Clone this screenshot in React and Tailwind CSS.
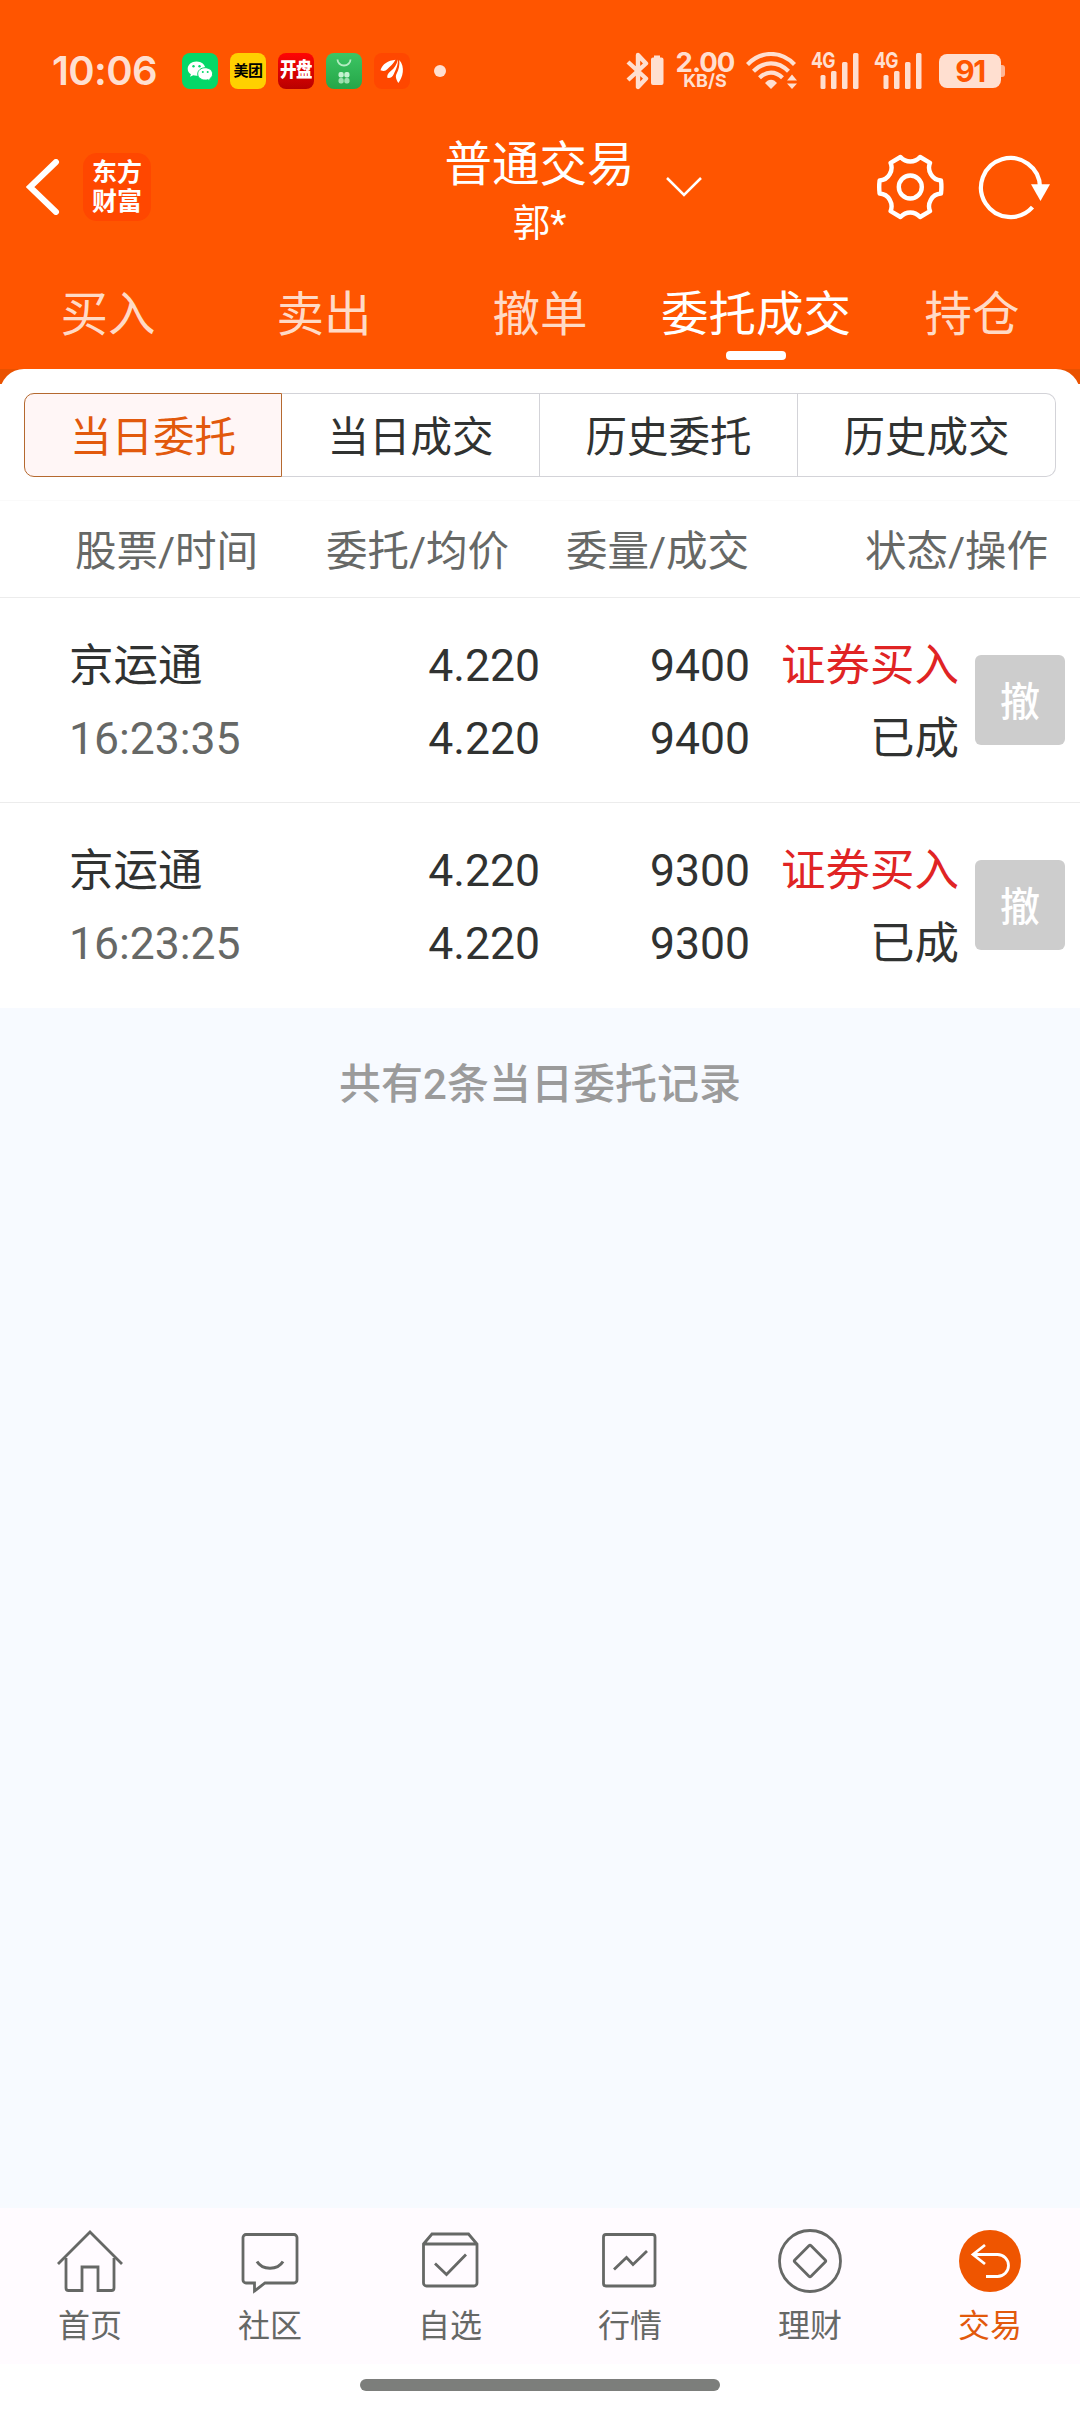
import React, { useState } from 'react';
import clsx from 'clsx';

const tabs = ['买入', '卖出', '撤单', '委托成交', '持仓'];

const segments = ['当日委托', '当日成交', '历史委托', '历史成交'];

const orders = [
  { name: '京运通', time: '16:23:35', price: '4.220', avg: '4.220', amount: '9400', filled: '9400', side: '证券买入', status: '已成' },
  { name: '京运通', time: '16:23:25', price: '4.220', avg: '4.220', amount: '9300', filled: '9300', side: '证券买入', status: '已成' },
];

const WechatIcon = () => (
  <svg viewBox="0 0 36 36" className="size-9">
    <rect width="36" height="36" rx="8" fill="#04d868" />
    <path d="M14.5 8.5c-5 0-8.8 3.2-8.8 7.2 0 2.300 1.200 4.200 3.200 5.500l-.8 2.600 3.100-1.600c1 .3 2.200.5 3.300.5 5 0 8.900-3.200 8.900-7 0-4-3.900-7.200-8.900-7.200z" fill="#fff" />
    <path d="M23.200 14.700c-4.200 0-7.500 2.800-7.500 6.200s3.300 6.200 7.500 6.200c.9 0 1.800-.1 2.600-.4l2.500 1.400-.6-2.200c1.700-1.200 2.900-2.900 2.900-5 0-3.400-3.300-6.200-7.400-6.200z" fill="#fff" stroke="#04d868" strokeWidth="1" />
    <g fill="#04d868">
      <circle cx="11.500" cy="13.300" r="1.200" />
      <circle cx="17.500" cy="13.300" r="1.200" />
      <circle cx="20.800" cy="19" r="1" />
      <circle cx="25.700" cy="19" r="1" />
    </g>
  </svg>
);

const CloverIcon = () => (
  <svg viewBox="0 0 36 36" className="size-9">
    <defs>
      <linearGradient id="clover" x1="0" y1="0" x2="0" y2="1">
        <stop offset="0" stopColor="#3cc564" />
        <stop offset="1" stopColor="#25a648" />
      </linearGradient>
    </defs>
    <rect width="36" height="36" rx="8" fill="url(#clover)" />
    <path d="M11.500 6.500a6.500 6 0 0 0 13 0" fill="none" stroke="#b5edc3" strokeWidth="1.800" />
    <g fill="#c5f2d0">
      <rect x="12.500" y="19" width="5.200" height="5.500" rx="2" />
      <rect x="18.300" y="19" width="5.200" height="5.500" rx="2" />
      <rect x="12.500" y="25" width="5.200" height="5.500" rx="2" opacity=".75" />
      <rect x="18.300" y="25" width="5.200" height="5.500" rx="2" opacity=".75" />
    </g>
  </svg>
);

const WingIcon = () => (
  <svg viewBox="0 0 36 36" className="size-9">
    <rect width="36" height="36" rx="8" fill="#ff4700" />
    <g fill="#fff">
      <path d="M21.500 6.800C14 7.500 8.500 11 6.500 17.200c3.500 1.300 5 .8 7-1.200 2.500-2.500 6-5 8-9.200z" />
      <path d="M23.800 6.500c-1 5-3.300 8.500-7 11.500-2.500 2-3.800 4-3.600 6.800 3.300.5 5.300-.8 6.600-3.800 2.200-5 4.500-9 4-14.500z" />
      <path d="M25.300 7c.5 5.500-.5 9.500-2.600 13.500-1.500 2.500-1 5 1.600 9.500C28.800 24.500 31.500 14 25.300 7z" />
    </g>
  </svg>
);

const BluetoothIcon = () => (
  <svg viewBox="0 0 38 38" className="h-[38px] w-[38px]" fill="none">
    <path d="M2 10l18 16.500-8 8.500V3l8 8.500L2 28" stroke="#ffdfd0" strokeWidth="4.400" strokeLinejoin="round" />
    <path d="M28 3.500h6v2h1.500a2 2 0 0 1 2 2v23.500a2 2 0 0 1-2 2h-8.500a2 2 0 0 1-2-2V7.500a2 2 0 0 1 2-2h1z" fill="#ffdfd0" />
  </svg>
);

const WifiIcon = () => (
  <svg viewBox="0 0 52 38" className="h-[38px] w-[52px]" fill="none">
    <g stroke="#ffdfd0" strokeWidth="4.200">
      <path d="M1.500 12.500C15-1.500 35-1.500 48.500 12.500" />
      <path d="M7.500 19.300c10.500-10.500 24.500-10.500 35 0" />
      <path d="M13.500 25.800c7-6.800 16-6.800 23 0" />
    </g>
    <path d="M19 31c3.500-4.500 8.500-4.500 12 0l-6 6z" fill="#ffdfd0" />
    <path d="M46 22.500l5 6H41zM46 37l5-5.500H41z" fill="#ffdfd0" />
  </svg>
);

const SignalIcon = () => (
  <div className="relative h-[38px] w-12">
    <svg viewBox="0 0 48 38" className="h-[38px] w-12" fill="#ffdfd0">
      <rect x="9.500" y="23" width="5" height="14" rx="1.500" />
      <rect x="20" y="19" width="5.500" height="18" rx="1.500" />
      <rect x="31" y="10" width="5.500" height="27" rx="1.500" />
      <rect x="42" y="1" width="5.500" height="36" rx="1.500" />
    </svg>
    <span className="absolute top-0 left-0 origin-left scale-x-80 text-[22px] leading-[17px] font-bold tracking-[-0.8px]">4G</span>
  </div>
);

const StatusBar = () => (
  <div className="flex h-[104px] items-center pt-[38px] pl-[52px] text-[#ffdfd0]">
    <span className="w-[130px] font-['Inter',sans-serif] text-[40px] leading-none font-semibold tracking-[-0.6px]">10:06</span>
    <div className="flex items-center gap-3">
      <WechatIcon />
      <span className="flex size-9 items-center justify-center rounded-lg bg-[#ffd000] text-[15px] font-bold tracking-[-0.5px] text-black">美团</span>
      <span className="flex size-9 items-center justify-center rounded-lg bg-linear-to-b from-[#ff0505] to-[#b80000] text-[16.5px] font-black tracking-[-0.5px] text-white">
        <span className="scale-y-125">开盘</span>
      </span>
      <CloverIcon />
      <WingIcon />
    </div>
    <span className="ml-6 size-3 rounded-full bg-[#ffdfd0]" />
    <div className="ml-[180px] flex items-center font-['Inter',sans-serif]">
      <BluetoothIcon />
      <div className="ml-3 flex w-[58px] flex-col items-center pb-[3px]">
        <span className="text-[27.5px] leading-[22px] font-bold tracking-[-1px]">2.00</span>
        <span className="text-[18px] leading-4 font-bold">KB/S</span>
      </div>
      <div className="ml-3"><WifiIcon /></div>
      <div className="ml-[13px]"><SignalIcon /></div>
      <div className="ml-[15px]"><SignalIcon /></div>
      <span className="ml-[17px] flex h-[34px] w-[62px] items-center justify-center rounded-[8px] bg-[#ffdfd0] text-[30px] leading-none font-bold tracking-[-1.5px] text-[#ff5500]">91</span>
      <span className="h-3 w-1 rounded-r-[3px] bg-[#ffb594]" />
    </div>
  </div>
);

const Header = () => (
  <div className="flex h-[166px] items-center text-white">
    <div className="flex w-[444px] items-center">
      <svg viewBox="0 0 34 56" className="ml-[26px] h-14 w-[34px]" fill="none" stroke="#fff" strokeWidth="6" strokeLinecap="round">
        <path d="M30 3L4 28l26 25" />
      </svg>
      <div className="ml-[23px] flex size-[68px] flex-col items-center justify-center rounded-[14px] bg-[#ff4700] text-[25px] leading-[29px] font-bold">
        <span>东方</span>
        <span>财富</span>
      </div>
    </div>
    <div className="mt-3 flex w-[191px] flex-col items-center leading-[60px]">
      <h1 className="text-[47.5px]">普通交易</h1>
      <span className="text-[37.5px] leading-[57px]">郭*</span>
    </div>
    <svg viewBox="0 0 38 22" className="ml-[30px] h-[22px] w-[38px]" fill="none" stroke="#fff" strokeWidth="2.500">
      <path d="M2 2l17 17L36 2" />
    </svg>
    <svg viewBox="0 0 68 68" className="ml-[173px] size-[68px]" fill="none" stroke="#fff" strokeWidth="4.400">
      <circle cx="34.300" cy="34" r="11.500" />
      <path
        d="M24.500 4C30 10 38.600 10 44.100 4L54 9.800C51 17 55.500 27 65 27.500Q65.800 34 65 40.500C55.500 41 51 51 54 58.200L44.100 64C38.600 58 30 58 24.500 64L14.600 58.200C17.600 51 13.100 41 3.600 40.500Q2.800 34 3.600 27.500C13.100 27 17.600 17 14.600 9.800Z"
        strokeLinejoin="round"
      />
    </svg>
    <svg viewBox="0 0 74 68" className="ml-[34px] h-[68px] w-[74px]" fill="none">
      <path d="M54.500 54.200A29.500 29.500 0 1 1 62 34" stroke="#fff" strokeWidth="4.200" />
      <path d="M53 31.200h19L62.500 48z" fill="#fff" />
    </svg>
  </div>
);

const HomeIcon = () => (
  <>
    <path d="M4 37L36 5l32 32" />
    <path d="M12 31v30a2.500 2.500 0 0 0 2.500 2.500H28V40h16v23.500h13.500A2.500 2.500 0 0 0 60 61V31" />
  </>
);

const ChatIcon = () => (
  <>
    <path d="M12 7.500h48a3 3 0 0 1 3 3v42.500a3 3 0 0 1-3 3H31L20.500 64V56H12a3 3 0 0 1-3-3V10.500a3 3 0 0 1 3-3z" />
    <path d="M23 34.500a14.500 12 0 0 0 26 0" strokeWidth="3" />
  </>
);

const BoxIcon = () => (
  <>
    <path d="M9.500 17l8.500-10h36.500l8.500 10v39a3 3 0 0 1-3 3H12.500a3 3 0 0 1-3-3zM9.500 17H63" />
    <path d="M21 36.500L32.500 47.500 52 27.500" />
  </>
);

const ChartIcon = () => (
  <>
    <rect x="9.500" y="7.500" width="51.500" height="51.500" rx="2.500" />
    <path d="M20 42.500l12.500-12L39 37.500 53 24" />
  </>
);

const DiamondIcon = () => (
  <>
    <circle cx="36" cy="34" r="30.500" />
    <rect x="24.500" y="22.500" width="23" height="23" rx="1.500" transform="rotate(45 36 34)" />
  </>
);

const TradeIcon = () => (
  <>
    <circle cx="36" cy="34" r="31" fill="#ef5500" stroke="none" />
    <g stroke="#fff">
      <path d="M19 27.500h24.500a11 11 0 0 1 0 22H32" />
      <path d="M31 18L19 27.500 31 37" />
    </g>
  </>
);

const navItems = [
  { label: '首页', Icon: HomeIcon },
  { label: '社区', Icon: ChatIcon },
  { label: '自选', Icon: BoxIcon },
  { label: '行情', Icon: ChartIcon },
  { label: '理财', Icon: DiamondIcon },
  { label: '交易', Icon: TradeIcon },
];

const OrderRow = ({ order }) => (
  <div className="flex h-[205px] items-center border-b border-[#ececec] text-[44.5px] leading-[73px] text-[#303231] last:border-white">
    <div className="w-[270px] pt-[5px] pl-[69px]">
      <div>{order.name}</div>
      <div className="text-[#666866]">{order.time}</div>
    </div>
    <div className="w-[270px] pt-[5px] text-right">
      <div>{order.price}</div>
      <div>{order.avg}</div>
    </div>
    <div className="w-[210px] pt-[5px] text-right">
      <div>{order.amount}</div>
      <div>{order.filled}</div>
    </div>
    <div className="w-[209px] pt-[6px] text-right">
      <div className="text-[#e02424]">{order.side}</div>
      <div>{order.status}</div>
    </div>
    <button className="ml-4 size-[90px] rounded-[6px] bg-[#cdcdcd] pt-[5px] text-[40px] leading-[85px] font-medium text-white">撤</button>
  </div>
);

const App = () => {
  const [activeTab, setActiveTab] = useState('委托成交');
  const [activeSegment, setActiveSegment] = useState('当日委托');
  const [activeNav, setActiveNav] = useState('交易');

  return (
    <div className="flex h-[2412px] w-[1080px] flex-col overflow-hidden bg-[#f7faff] font-['Roboto','Noto_Sans_CJK_SC',sans-serif]">
      <header className="bg-[#ff5500]">
        <StatusBar />
        <Header />
        <div className="flex h-[99px]">
          {tabs.map((tab) => (
            <button
              key={tab}
              onClick={() => setActiveTab(tab)}
              className={clsx(
                'flex w-[216px] flex-col items-center pt-[13px] text-[47.5px] leading-[64px]',
                activeTab === tab ? 'text-white' : 'text-[#ffdac6]'
              )}
            >
              {tab}
              {activeTab === tab && <span className="mt-1 h-[9px] w-[60px] rounded-[4px] bg-white" />}
            </button>
          ))}
        </div>
      </header>

      {/* Orders panel */}
      <div className="bg-linear-to-b from-[#ea5200] from-[15px] to-white to-[15px]">
        <div className="rounded-t-[24px] bg-white">
          <div className="px-6 pt-6 pb-[23px]">
            <div className="flex h-[84px]">
              {segments.map((segment) => (
                <button
                  key={segment}
                  onClick={() => setActiveSegment(segment)}
                  className={clsx(
                    'w-[258px] border pt-[5px] text-[41.5px] leading-[77px] first:rounded-l-[10px] last:rounded-r-[10px]',
                    activeSegment === segment
                      ? 'border-[#b5692f] bg-[#fff6f6] text-[#e2590c]'
                      : 'border-l-0 border-[#d3d3d8] text-[#303231]'
                  )}
                >
                  {segment}
                </button>
              ))}
            </div>
          </div>

          <div className="flex h-[98px] border-t border-b border-t-[#fafafa] border-b-[#ececec] pt-1 text-[41.5px] leading-[94px] text-[#666866]">
            <span className="w-[258px] text-right">股票/时间</span>
            <span className="w-[251px] text-right">委托/均价</span>
            <span className="w-[240px] text-right">委量/成交</span>
            <span className="w-[299px] text-right">状态/操作</span>
          </div>

          <div>
            {orders.map((order) => (
              <OrderRow key={order.time} order={order} />
            ))}
          </div>
        </div>
      </div>

      <p className="flex-1 pt-[47px] text-center text-[42px] leading-[60px] font-medium text-[#9b9b9b]">共有2条当日委托记录</p>

      {/* Bottom navigation */}
      <nav className="flex h-[156px] bg-[#fffbff]">
        {navItems.map(({ label, Icon }) => (
          <button
            key={label}
            onClick={() => setActiveNav(label)}
            className={clsx(
              'flex w-[180px] flex-col items-center pt-[19px] text-[32px] leading-[42px]',
              activeNav === label ? 'text-[#e2590c]' : 'text-[#666866]'
            )}
          >
            <svg viewBox="0 0 72 72" className="mr-px mb-[6px] size-[72px]" fill="none" stroke="#666866" strokeWidth="2.800">
              <Icon />
            </svg>
            {label}
          </button>
        ))}
      </nav>
      <div className="flex h-12 justify-center bg-white pt-[15px]">
        <div className="h-3 w-[360px] rounded-full bg-[#7c7e7b]" />
      </div>
    </div>
  );
};

export default App;
